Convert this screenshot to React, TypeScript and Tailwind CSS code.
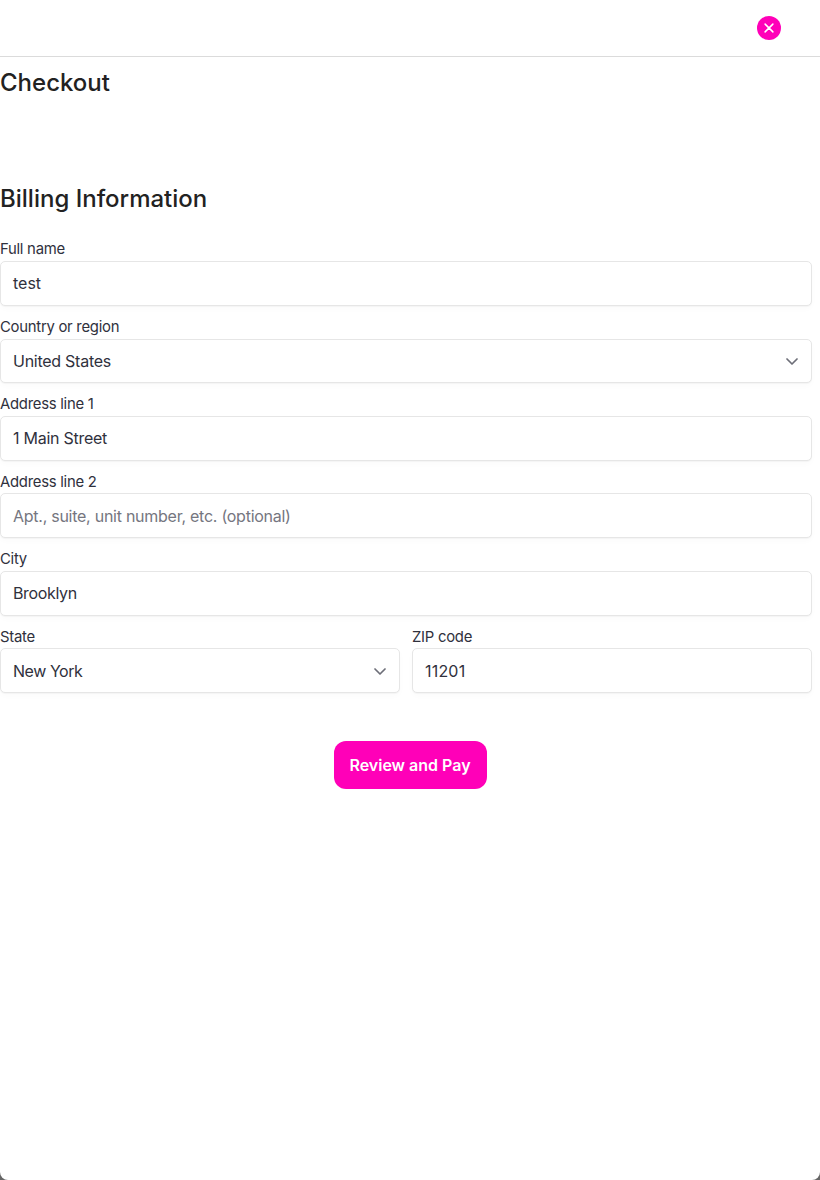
import type { ReactNode } from "react";

const box =
  "flex h-[44.6px] w-full items-center justify-between rounded-[5px] border border-[#e6e6e6] bg-white px-3 text-[16px] text-[#30313d] shadow-[0_1px_1px_rgba(0,0,0,0.03),0_3px_6px_rgba(0,0,0,0.02)]";

function Field({ label, children }: { label: string; children: ReactNode }) {
  return (
    <div className="flex flex-1 flex-col">
      <div className="mb-[2.7px] h-[17px] text-[14.88px] leading-[17px] tracking-[-0.27px] text-[#30313d]">{label}</div>
      {children}
    </div>
  );
}

function Chevron() {
  return (
    <svg className="mr-px" width="12" height="12" viewBox="0 0 12 12" fill="none" stroke="#6d6e78" strokeWidth="1.7" strokeLinecap="round" strokeLinejoin="round">
      <path d="M1 4l5 5 5-5" />
    </svg>
  );
}

export default function App() {
  return (
    <div className="h-[1180px] w-[820px] overflow-hidden bg-[#666]">
      <main className="flex h-full flex-col rounded-b-[8px] bg-white font-['Inter',sans-serif]">
        <header className="flex h-[57px] shrink-0 items-start justify-end border-b border-[#dbdbdb] pt-4 pr-[39px]">
          <button className="flex h-6 w-6 items-center justify-center rounded-full bg-[#ff00b8]" aria-label="Close">
            <svg width="10" height="10" viewBox="0 0 10 10" stroke="white" strokeWidth="1.5" strokeLinecap="round">
              <path d="M1.1 1.1l7.8 7.8M8.9 1.1l-7.8 7.8" />
            </svg>
          </button>
        </header>
        <h1 className="mt-2 h-9 text-2xl leading-9 font-medium text-[#222222]">Checkout</h1>
        <h2 className="mt-20 h-9 text-2xl leading-9 font-medium text-[#222222]">Billing Information</h2>
        <form className="mt-[24.4px] flex w-[812px] flex-col gap-[13.2px] tracking-[-0.26px]">
          <Field label="Full name"><div className={box}><span className="tracking-normal">test</span></div></Field>
          <Field label="Country or region"><div className={box}>United States<Chevron /></div></Field>
          <Field label="Address line 1"><div className={box}>1 Main Street</div></Field>
          <Field label="Address line 2"><div className={box}><span className="text-[#757680]">Apt., suite, unit number, etc. (optional)</span></div></Field>
          <Field label="City"><div className={box}><span className="tracking-[-0.35px]">Brooklyn</span></div></Field>
          <div className="flex gap-3">
            <Field label="State"><div className={box}><span className="tracking-[-0.45px]">New York</span><Chevron /></div></Field>
            <Field label="ZIP code"><div className={box}><span className="tracking-[0.2px]">11201</span></div></Field>
          </div>
        </form>
        <button className="mt-[47.7px] h-12 w-[153px] self-center rounded-xl bg-[#ff00b8] text-base font-semibold text-white">Review and Pay</button>
      </main>
    </div>
  );
}
